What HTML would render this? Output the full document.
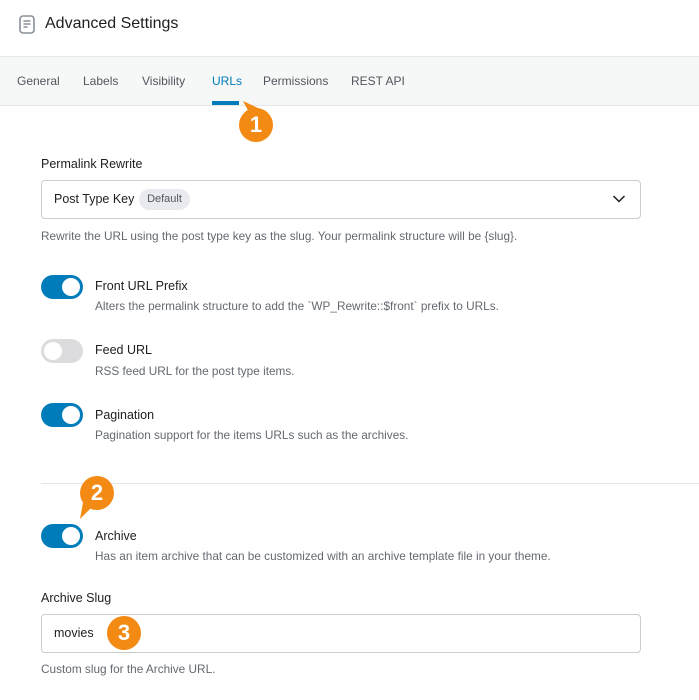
<!DOCTYPE html>
<html><head><style>
*{margin:0;padding:0;box-sizing:border-box}
body{width:699px;height:700px;background:#fff;font-family:"Liberation Sans",sans-serif;color:#1e1e1e;position:relative;overflow:hidden}
.a{position:absolute;white-space:nowrap}
.t{font-size:12.5px;color:#1e1e1e}
.h{font-size:11.8px;color:#646970}
.tab{font-size:12px;color:#50575e;top:74px}
.tog{position:absolute;left:41px;width:42px;height:24px;border-radius:12px;background:#007cba}
.tog::after{content:"";position:absolute;right:3px;top:3px;width:18px;height:18px;border-radius:50%;background:#fff}
.tog.off{background:#dcdcde;left:41px}
.tog.off::after{left:3px;right:auto}
.badge{position:absolute;width:34px;height:34px;border-radius:50%;background:#f38a13;color:#fff;font-weight:bold;font-size:22px;text-align:center;line-height:34px}
.box{position:absolute;left:41px;width:600px;border:1px solid #ccc;border-radius:4px;background:#fff}
</style></head><body>
<svg class="a" style="left:19px;top:15px" width="16" height="19" viewBox="0 0 16 19"><rect x="1" y="1" width="14" height="17" rx="3" fill="none" stroke="#8a8f99" stroke-width="1.6"/><path d="M4.5 6h7M4.5 9h7M4.5 12h4" stroke="#8a8f99" stroke-width="1.5"/></svg>
<div class="a" style="left:45px;top:15px;font-size:16px;color:#1e1e1e">Advanced Settings</div>
<div class="a" style="left:0;top:56px;width:699px;height:50px;background:#f6f7f7;border-top:1px solid #e5e6e8;border-bottom:1px solid #e5e6e8"></div>
<div class="a tab" style="left:17px">General</div>
<div class="a tab" style="left:83px">Labels</div>
<div class="a tab" style="left:142px">Visibility</div>
<div class="a tab" style="left:212px;color:#007cba">URLs</div>
<div class="a" style="left:212px;top:101px;width:27px;height:4px;background:#007cba"></div>
<div class="a tab" style="left:263px">Permissions</div>
<div class="a tab" style="left:351px">REST API</div>
<svg class="a" style="left:240px;top:100px" width="20" height="20"><path d="M3 1 L20 9 L12 18 Z" fill="#f38a13"/></svg>
<div class="badge" style="left:239px;top:108px">1</div>

<div class="a t" style="left:41px;top:157px">Permalink Rewrite</div>
<div class="box" style="top:180px;height:39px"></div>
<div class="a t" style="left:54px;top:192px">Post Type Key</div>
<div class="a" style="left:139px;top:189px;width:51px;height:21px;border-radius:11px;background:#e9eaee;color:#50575e;font-size:11px;text-align:center;line-height:21px">Default</div>
<svg class="a" style="left:612px;top:194px" width="14" height="10"><path d="M1.5 2 L7 7.5 L12.5 2" fill="none" stroke="#1e1e1e" stroke-width="1.5"/></svg>
<div class="a h" style="left:41px;top:229px">Rewrite the URL using the post type key as the slug. Your permalink structure will be {slug}.</div>

<div class="tog" style="top:275px"></div>
<div class="a t" style="left:95px;top:279px">Front URL Prefix</div>
<div class="a h" style="left:95px;top:299px">Alters the permalink structure to add the `WP_Rewrite::$front` prefix to URLs.</div>
<div class="tog off" style="top:339px"></div>
<div class="a t" style="left:95px;top:343px">Feed URL</div>
<div class="a h" style="left:95px;top:364px">RSS feed URL for the post type items.</div>
<div class="tog" style="top:403px"></div>
<div class="a t" style="left:95px;top:408px">Pagination</div>
<div class="a h" style="left:95px;top:428px">Pagination support for the items URLs such as the archives.</div>

<div class="a" style="left:41px;top:483px;width:658px;height:1px;background:#e5e6e8"></div>
<svg class="a" style="left:76px;top:495px" width="24" height="26"><path d="M4 24 L8 2 L22 6 Z" fill="#f38a13"/></svg>
<div class="badge" style="left:80px;top:476px">2</div>
<div class="tog" style="top:524px"></div>
<div class="a t" style="left:95px;top:529px">Archive</div>
<div class="a h" style="left:95px;top:549px">Has an item archive that can be customized with an archive template file in your theme.</div>

<div class="a t" style="left:41px;top:591px">Archive Slug</div>
<div class="box" style="top:614px;height:39px"></div>
<div class="a t" style="left:54px;top:626px">movies</div>
<div class="badge" style="left:107px;top:616px">3</div>
<div class="a h" style="left:41px;top:662px">Custom slug for the Archive URL.</div>
</body></html>
